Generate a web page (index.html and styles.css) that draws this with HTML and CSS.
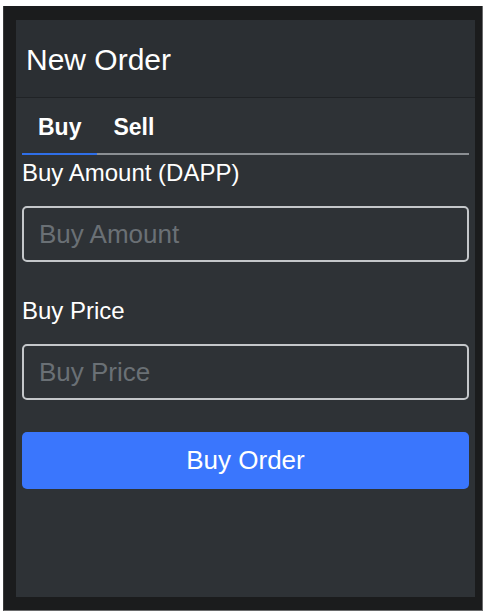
FILE: index.html
```html
<!DOCTYPE html>
<html lang="en">
<head>
<meta charset="utf-8">
<title>New Order</title>
<link rel="stylesheet" href="styles.css">
</head>
<body>
<div class="frame">
  <div class="panel">
    <div class="panel-header">
      <h1 class="title">New Order</h1>
    </div>
    <div class="panel-body">
      <div class="tabs">
        <div class="tab active">Buy</div>
        <div class="tab">Sell</div>
      </div>
      <form class="order-form">
        <label class="field-label label-first" for="amount">Buy Amount (DAPP)</label>
        <input class="field-input" id="amount" type="text" placeholder="Buy Amount">
        <label class="field-label label-second" for="price">Buy Price</label>
        <input class="field-input" id="price" type="text" placeholder="Buy Price">
        <button class="submit-btn" type="button">Buy Order</button>
      </form>
    </div>
  </div>
</div>
</body>
</html>
```
FILE: styles.css
```css
* { box-sizing: border-box; }
html, body { margin: 0; padding: 0; background: #ffffff; }
body {
  font-family: "Liberation Sans", Arial, sans-serif;
  color: #ffffff;
}
.frame {
  margin: 6px 0 0 3px;
  width: 480px;
  height: 605px;
  background: #1b1c1d;
  border-right: 1px solid #6a6b6c;
  border-bottom: 1px solid #6a6b6c;
  border-left: 1px solid #3a3b3c;
  padding: 14px 7px 13px 12px;
}
.panel {
  width: 459px;
  height: 577px;
  background: #2e3236;
  display: flex;
  flex-direction: column;
}
.panel-header {
  height: 78px;
  background: #2b2f33;
  border-bottom: 1px solid #202326;
  padding: 0 10px;
  display: flex;
  align-items: flex-start;
}
.title {
  margin: 0;
  padding-top: 23px;
  font-weight: normal;
  font-size: 30px;
  line-height: 34px;
  color: #ffffff;
}
.panel-body {
  padding: 0 6px;
}
.tabs {
  display: flex;
  border-bottom: 2px solid #8b8f93;
  padding-top: 15px;
}
.tab {
  padding: 0 16px 12px;
  font-weight: bold;
  font-size: 23px;
  line-height: 28px;
  color: #ffffff;
  margin-bottom: -2px;
  border-bottom: 2px solid transparent;
}
.tab.active {
  border-bottom-color: #2f6fe8;
}
.order-form {
  display: flex;
  flex-direction: column;
}
.field-label {
  font-size: 24px;
  line-height: 28px;
  color: #ffffff;
}
.label-first { margin-top: 4px; }
.label-second { margin-top: 35px; }
.field-input {
  margin-top: 19px;
  height: 56px;
  width: 100%;
  background: transparent;
  border: 2px solid #c4c7ca;
  border-radius: 5px;
  padding: 0 15px;
  font-family: "Liberation Sans", Arial, sans-serif;
  font-size: 26px;
  color: #ffffff;
  outline: none;
}
.field-input::placeholder {
  color: #6a7075;
}
.submit-btn {
  margin-top: 32px;
  height: 57px;
  width: 100%;
  background: #3a76fd;
  border: none;
  border-radius: 5px;
  color: #ffffff;
  font-family: "Liberation Sans", Arial, sans-serif;
  font-size: 26px;
}
```
